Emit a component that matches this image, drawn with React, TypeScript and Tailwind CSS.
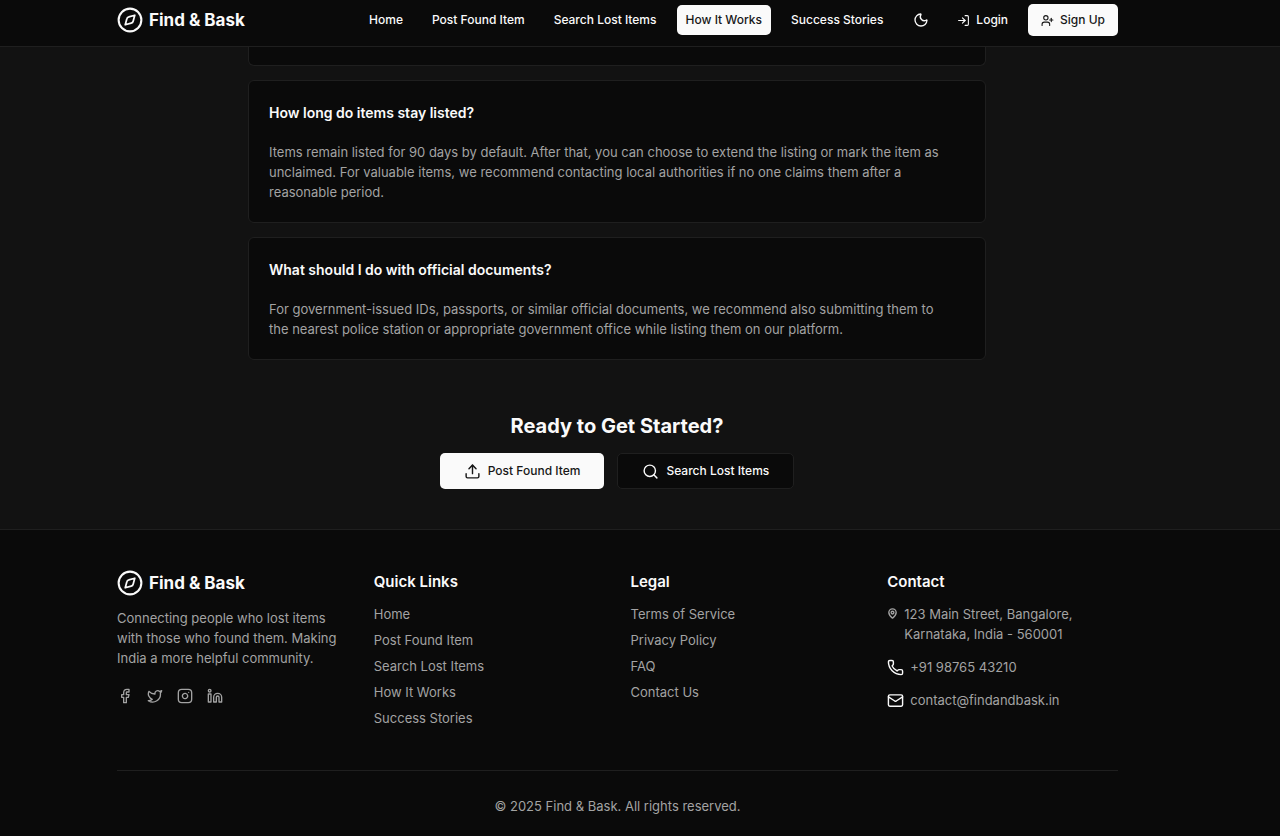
import React from "react";
import {
  Facebook,
  Instagram,
  Linkedin,
  LogIn,
  Mail,
  MapPin,
  Moon,
  Phone,
  Search,
  Twitter,
  Upload,
  UserPlus,
} from "lucide-react";

const navItems = ["Home", "Post Found Item", "Search Lost Items", "How It Works", "Success Stories"];
const legalItems = ["Terms of Service", "Privacy Policy", "FAQ", "Contact Us"];
const socials = [
  { label: "Facebook", Icon: Facebook },
  { label: "Twitter", Icon: Twitter },
  { label: "Instagram", Icon: Instagram },
  { label: "LinkedIn", Icon: Linkedin },
];

const faqs = [
  {
    question: "How long do items stay listed?",
    answer:
      "Items remain listed for 90 days by default. After that, you can choose to extend the listing or mark the item as unclaimed. For valuable items, we recommend contacting local authorities if no one claims them after a reasonable period.",
  },
  {
    question: "What should I do with official documents?",
    answer:
      "For government-issued IDs, passports, or similar official documents, we recommend also submitting them to the nearest police station or appropriate government office while listing them on our platform.",
  },
];

function CompassLogo() {
  return (
    <svg
      viewBox="0 0 24 24"
      className="size-[26px]"
      fill="none"
      stroke="currentColor"
      strokeLinecap="round"
      strokeLinejoin="round"
      aria-hidden="true"
    >
      <circle cx="12" cy="12" r="10.5" strokeWidth="1.9" />
      <path
        strokeWidth="1.6"
        d="M16.4 7.6l-1.5 5.5a2.4 2.4 0 0 1-1.8 1.8L7.6 16.4l1.5-5.5a2.4 2.4 0 0 1 1.8-1.8z"
      />
    </svg>
  );
}

function Brand() {
  return (
    <a href="#" className="flex items-center gap-1.5 text-[17px] leading-6 font-bold">
      <CompassLogo />
      Find &amp; Bask
    </a>
  );
}

function Header() {
  return (
    <header className="border-b border-[#1f1f1f] bg-[#0a0a0a] pt-1 pr-[45px] pb-2.5">
      <div className="mx-auto flex max-w-[1001px] items-center justify-between">
        <Brand />
        <div className="flex items-center gap-[13px] text-xs font-medium">
          <nav className="flex items-center gap-[11px]">
            {navItems.map((item) => (
              <a
                key={item}
                href="#"
                className={
                  item === "How It Works"
                    ? "rounded-[5px] bg-[#fafafa] px-[9px] py-[7px] text-[#171717]"
                    : "rounded-[5px] px-[9px] py-[7px]"
                }
              >
                {item}
              </a>
            ))}
          </nav>
          <div className="flex items-center gap-[7px]">
            <button type="button" aria-label="Toggle theme" className="flex size-8 items-center justify-center">
              <Moon className="size-4" />
            </button>
            <button type="button" className="flex h-8 items-center gap-1.5 px-[13px]">
              <LogIn className="size-[13px]" aria-hidden="true" />
              Login
            </button>
            <button
              type="button"
              className="flex h-8 items-center gap-1.5 rounded-[5px] bg-[#fafafa] px-[13px] text-[#171717]"
            >
              <UserPlus className="size-[13px]" aria-hidden="true" />
              Sign Up
            </button>
          </div>
        </div>
      </div>
    </header>
  );
}

function Footer() {
  return (
    <footer className="border-t border-[#1f1f1f] bg-[#0a0a0a] pt-10 pr-[45px] pb-5 text-[13px] leading-5 text-[#a3a3a3]">
      <div className="mx-auto max-w-[1001px]">
        <div className="grid grid-cols-4 gap-[26px]">
          <div>
            <div className="text-[#fafafa]">
              <Brand />
            </div>
            <p className="mt-3">
              Connecting people who lost items with those who found them. Making India a more helpful community.
            </p>
            <div className="mt-5 flex gap-3.5">
              {socials.map(({ label, Icon }) => (
                <a key={label} href="#" aria-label={label}>
                  <Icon className="size-4" />
                </a>
              ))}
            </div>
          </div>
          <div>
            <h3 className="text-[15px] leading-6 font-semibold text-[#fafafa]">Quick Links</h3>
            <ul className="mt-2.5 flex flex-col gap-1.5">
              {navItems.map((item) => (
                <li key={item}>
                  <a href="#">{item}</a>
                </li>
              ))}
            </ul>
          </div>
          <div>
            <h3 className="text-[15px] leading-6 font-semibold text-[#fafafa]">Legal</h3>
            <ul className="mt-2.5 flex flex-col gap-1.5">
              {legalItems.map((item) => (
                <li key={item}>
                  <a href="#">{item}</a>
                </li>
              ))}
            </ul>
          </div>
          <div>
            <h3 className="text-[15px] leading-6 font-semibold text-[#fafafa]">Contact</h3>
            <ul className="mt-2.5 flex flex-col gap-[13px]">
              <li className="flex items-start gap-1.5">
                <MapPin className="mt-1 size-[11px] shrink-0" strokeWidth={3} aria-hidden="true" />
                <span>123 Main Street, Bangalore, Karnataka, India - 560001</span>
              </li>
              <li className="flex items-center gap-1.5">
                <Phone className="size-[17px] text-[#fafafa]" aria-hidden="true" />
                <a href="tel:+919876543210">+91 98765 43210</a>
              </li>
              <li className="flex items-center gap-1.5">
                <Mail className="size-[17px] text-[#fafafa]" aria-hidden="true" />
                <a href="mailto:contact@findandbask.in">contact@findandbask.in</a>
              </li>
            </ul>
          </div>
        </div>
        <p className="mt-[42px] border-t border-[#1f1f1f] pt-[25px] text-center">
          © 2025 Find &amp; Bask. All rights reserved.
        </p>
      </div>
    </footer>
  );
}

export default function App() {
  return (
    <div className="flex min-h-screen flex-col bg-[#0a0a0a] font-['Inter',sans-serif] text-[#fafafa]">
      <Header />
      <main className="bg-[#121212] pr-[46px] pb-10">
        <div className="mx-auto flex max-w-[738px] flex-col gap-3.5">
          <div className="h-[19px] rounded-b-[6px] border border-t-0 border-[#1f1f1f] bg-[#0a0a0a]" />
          {faqs.map(({ question, answer }) => (
            <article key={question} className="rounded-[6px] border border-[#1f1f1f] bg-[#0a0a0a] py-5 pr-8 pl-5">
              <h3 className="text-sm leading-6 font-semibold">{question}</h3>
              <p className="mt-[17px] text-[13px] leading-5 text-[#a3a3a3]">{answer}</p>
            </article>
          ))}
        </div>
        <section className="mt-[53px] flex flex-col items-center">
          <h2 className="text-xl leading-[26px] font-bold">Ready to Get Started?</h2>
          <div className="mt-3.5 flex gap-[13px] text-xs font-medium">
            <a
              href="#"
              className="flex h-9 items-center gap-[7px] rounded-[5px] bg-[#fafafa] px-6 text-[#171717]"
            >
              <Upload className="size-[17px]" aria-hidden="true" />
              Post Found Item
            </a>
            <a
              href="#"
              className="flex h-9 items-center gap-[7px] rounded-[5px] border border-[#1f1f1f] bg-[#0a0a0a] px-6"
            >
              <Search className="size-[17px]" aria-hidden="true" />
              Search Lost Items
            </a>
          </div>
        </section>
      </main>
      <Footer />
    </div>
  );
}
